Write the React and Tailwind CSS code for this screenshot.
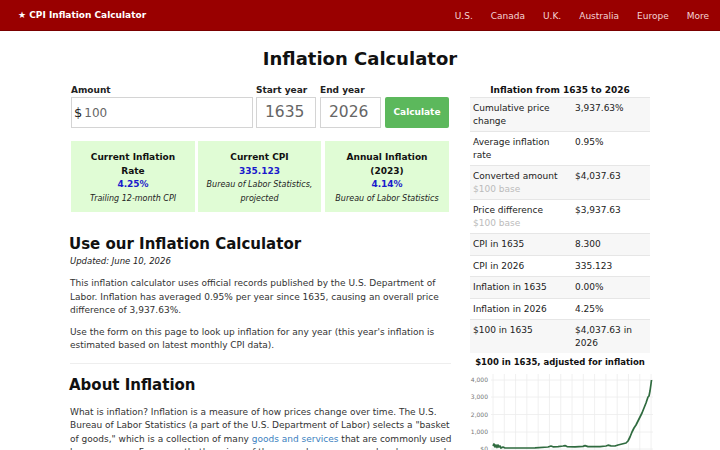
import React from "react";

const navLinks = ["U.S.", "Canada", "U.K.", "Australia", "Europe", "More"];

const cards = [
  { title: ["Current Inflation", "Rate"], value: "4.25%", note: ["Trailing 12-month CPI"], w: "w-[124px]" },
  { title: ["Current CPI"], value: "335.123", note: ["Bureau of Labor Statistics,", "projected"], w: "w-[123px]" },
  { title: ["Annual Inflation", "(2023)"], value: "4.14%", note: ["Bureau of Labor Statistics"], w: "w-[124px] ml-[1px]" },
];

const rows = [
  { label: "Cumulative price change", value: "3,937.63%" },
  { label: "Average inflation rate", value: "0.95%" },
  { label: "Converted amount", sub: "$100 base", value: "$4,037.63" },
  { label: "Price difference", sub: "$100 base", value: "$3,937.63" },
  { label: "CPI in 1635", value: "8.300" },
  { label: "CPI in 2026", value: "335.123" },
  { label: "Inflation in 1635", value: "0.00%" },
  { label: "Inflation in 2026", value: "4.25%" },
  { label: "$100 in 1635", value: "$4,037.63 in 2026" },
];

// grid positions for the small chart, in page pixels
const gridX = Array.from({ length: 15 }, (_, i) => 493 + i * 11.29);
const ticks = [
  { y: 379, label: "4,000" },
  { y: 396, label: "3,000" },
  { y: 413.5, label: "2,000" },
  { y: 431, label: "1,000" },
  { y: 448, label: "$0" },
];

const linePath =
  "M493 445 L494 443 L495 446 L496 444 L497 446.5 L498 444 L499 446 L500 445 L501 447 L503 446 L505 447 " +
  "L520 447 L535 446.8 L548 446 L551 445 L553 445.8 L558 445.6 L563 445 L565 444.6 L567 445.6 L575 445.8 " +
  "L583 445.4 L585 444.6 L588 445.6 L600 445.6 L606 445 L608 444.2 L611 444.8 L615 445 L618 444 L622 443 " +
  "L626 442 L628 440 L630 436 L632 431 L634 427 L636 424 L638 420 L640 416 L642 412 L644 407 L646 402 " +
  "L647 399 L648 396 L649 395 L650 390 L651 383 L651.5 379";

function Chart() {
  return (
    <svg width="190" height="83" viewBox="465 367 190 83" className="block -ml-[5px]">
      {gridX.map((x) => (
        <line key={x} x1={x} x2={x} y1="373" y2="450" stroke="#ececec" strokeWidth="0.8" />
      ))}
      {ticks.map((t) => (
        <g key={t.label}>
          <line x1="491" x2="653" y1={t.y} y2={t.y} stroke="#ececec" strokeWidth="0.8" />
          <text x="488" y={t.y + 2} textAnchor="end" fontSize="6" fill="#777" fontFamily="DejaVu Sans">
            {t.label}
          </text>
        </g>
      ))}
      <path d={linePath} fill="none" stroke="#2f6b3f" strokeWidth="1.7" strokeLinejoin="round" />
    </svg>
  );
}

export default function App() {
  return (
    <div className="w-[720px] h-[450px] overflow-hidden bg-white font-['DejaVu_Sans',sans-serif] text-[#222]">
      {/* Top bar */}
      <header className="h-[31px] bg-[#990000] border-b border-[#7a0000] flex items-center justify-between pt-[2px] pl-[18px] pr-[11px]">
        <a className="text-white font-bold text-[9px]">★ CPI Inflation Calculator</a>
        <nav className="flex gap-[18px] text-[9px] text-[#f4d4d4] pt-[1px]">
          {navLinks.map((n) => (
            <a key={n}>{n}</a>
          ))}
        </nav>
      </header>

      <h1 className="mt-[17px] text-center text-[18px] leading-[22px] font-bold text-[#111]">Inflation Calculator</h1>

      <div className="w-[580px] mx-auto mt-[14px] flex gap-[16px]">
        {/* Main column */}
        <main className="w-[384px]">
          <form className="flex items-end gap-[3px] pl-[1px]">
            <div className="w-[182px]">
              <div className="text-[9px] font-bold leading-[12px] mb-[1px]">Amount</div>
              <div className="h-[31px] border border-[#d4d4d4] flex items-center pl-[2px]">
                <span className="text-[13px] text-[#222]">$</span>
                <span className="ml-[2px] text-[12px] text-[#666]">100</span>
              </div>
            </div>
            <div className="w-[60px]">
              <div className="text-[9px] font-bold leading-[12px] mb-[1px]">Start year</div>
              <div className="h-[31px] border border-[#d4d4d4] flex items-center pl-[8px] text-[15.5px] text-[#666]">1635</div>
            </div>
            <div className="w-[61px] ml-[1px]">
              <div className="text-[9px] font-bold leading-[12px] mb-[1px]">End year</div>
              <div className="h-[31px] border border-[#d4d4d4] flex items-center pl-[8px] text-[15.5px] text-[#666]">2026</div>
            </div>
            <button type="button" className="ml-[1px] w-[64px] h-[31px] bg-[#5cb85c] rounded-[2px] text-white text-[9px] font-bold">
              Calculate
            </button>
          </form>

          <div className="mt-[13px] pl-[1px] flex gap-[3px]">
            {cards.map((c) => (
              <div key={c.value} className={`${c.w} h-[71px] bg-[#e0fcd5] pt-[10px] text-center leading-[13.5px]`}>
                {c.title.map((t) => (
                  <div key={t} className="text-[9px] font-bold text-[#111]">{t}</div>
                ))}
                <div className="text-[9px] font-bold text-[#1a1acc]">{c.value}</div>
                {c.note.map((t) => (
                  <div key={t} className="text-[8px] italic text-[#222]">{t}</div>
                ))}
              </div>
            ))}
          </div>

          <h2 className="mt-[21px] -ml-[1px] text-[15px] leading-[22px] font-bold text-[#111]">Use our Inflation Calculator</h2>
          <p className="text-[8.5px] italic leading-[13px] text-[#222]">Updated: June 10, 2026</p>
          <p className="mt-[9px] text-[9px] leading-[13.5px] text-[#333]">
            This inflation calculator uses official records published by the U.S. Department of Labor. Inflation has
            averaged 0.95% per year since 1635, causing an overall price difference of 3,937.63%.
          </p>
          <p className="mt-[8px] text-[9px] leading-[13.5px] text-[#333]">
            Use the form on this page to look up inflation for any year (this year's inflation is estimated based on
            latest monthly CPI data).
          </p>
          <hr className="mt-[10px] w-[381px] border-[#eeeeee]" />
          <h2 className="mt-[10px] -ml-[1px] text-[15px] leading-[22px] font-bold text-[#111]">About Inflation</h2>
          <p className="mt-[10px] text-[9px] leading-[13.5px] text-[#333]">
            What is inflation? Inflation is a measure of how prices change over time. The U.S. Bureau of Labor
            Statistics (a part of the U.S. Department of Labor) selects a "basket of goods," which is a collection of
            many <a className="text-[#3b7fc0]">goods and services</a> that are commonly used by consumers. For a month,
            the prices of these goods are measured and compared.
          </p>
        </main>

        {/* Sidebar */}
        <aside className="w-[180px]">
          <div className="text-center text-[9px] font-bold leading-[13px] text-[#111]">Inflation from 1635 to 2026</div>
          <table className="w-full text-[9px] leading-[12.5px] text-[#222]">
            <tbody>
              {rows.map((r, i) => (
                <tr key={r.label} className={`border-t border-[#e6e6e6] ${i % 2 === 0 ? "bg-[#f7f7f7]" : "bg-white"}`}>
                  <td className="w-[102px] pl-[3px] pr-[4px] py-[4px] align-top">
                    {r.label}
                    {r.sub && <div className="text-[#bbbbbb]">{r.sub}</div>}
                  </td>
                  <td className="pl-[3px] pr-[3px] py-[4px] align-top">{r.value}</td>
                </tr>
              ))}
            </tbody>
          </table>
          <div className="mt-[3px] text-center text-[8.5px] font-bold leading-[12px] text-[#111]">
            $100 in 1635, adjusted for inflation
          </div>
          <Chart />
        </aside>
      </div>
    </div>
  );
}
